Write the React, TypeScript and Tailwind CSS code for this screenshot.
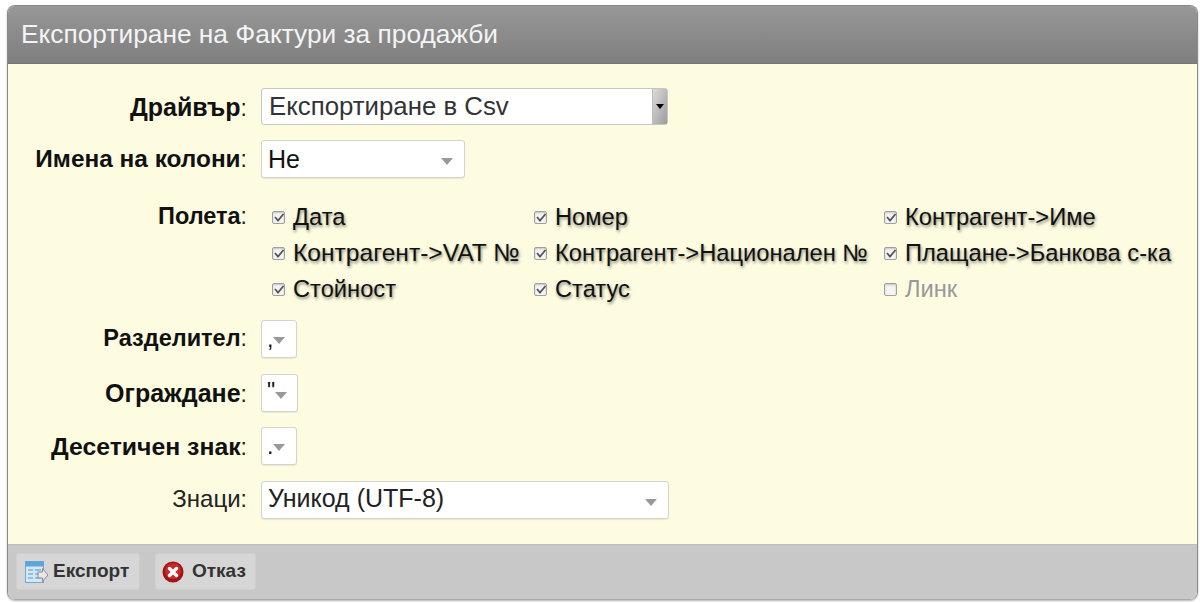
function Row({ label, bold = true, children, cls, sizeCls = "text-[24.4px]", labelCls = "" }: { label: string; bold?: boolean; children: React.ReactNode; cls: string; sizeCls?: string; labelCls?: string }) {
  return (
    <div className={`flex items-center ${cls}`}>
      <div className={`relative w-[239px] shrink-0 text-right leading-[28px] text-[#111] whitespace-nowrap ${labelCls}`}>
        <span className={bold ? `font-bold ${sizeCls}` : "text-[#222] text-[24px]"}>{label}</span>
        <span className="text-[#222] text-[23px]">:</span>
      </div>
      <div className="ml-[14px]">{children}</div>
    </div>
  );
}

function Arrow({ cls = "" }: { cls?: string }) {
  return <span className={`block w-0 h-0 border-l-[6px] border-r-[6px] border-t-[7px] border-l-transparent border-r-transparent border-t-[#999] ${cls}`} />;
}

function Box({ w, h, children, textCls = "", arrowCls = "" }: { w: string; h: string; children: React.ReactNode; textCls?: string; arrowCls?: string }) {
  return (
    <div className={`relative ${w} ${h} bg-white border border-[#d4d4cc] rounded-[3px] shadow-[0_1px_1px_rgba(0,0,0,0.08)] flex items-start`}>
      <span className={`pl-[6px] text-[25px] leading-[28px] text-[#222] ${textCls}`}>{children}</span>
      <Arrow cls={`absolute ${arrowCls}`} />
    </div>
  );
}

function Check({ label, checked = true, w, sizeCls = "text-[23.7px]" }: { label: string; checked?: boolean; w: string; sizeCls?: string }) {
  return (
    <label className={`flex items-center h-[36px] ${w}`}>
      <span className="relative w-[13px] h-[13px] shrink-0 mr-[8px] bg-[#f4f4f4] border border-[#a0a0a0] rounded-[2px] shadow-[inset_0_1px_2px_rgba(0,0,0,0.2)]">
        {checked && (
          <svg viewBox="0 0 13 13" className="absolute left-[-1px] top-[-1px] w-[14px] h-[13px]">
            <path d="M2.5 6 L5.5 9.5 L11 3" fill="none" stroke="#555" strokeWidth="1.8" />
          </svg>
        )}
      </span>
      <span className={checked
        ? `${sizeCls} leading-[28px] whitespace-nowrap text-[#111] [text-shadow:1px_2px_3px_rgba(0,0,0,0.45)]`
        : `${sizeCls} leading-[28px] whitespace-nowrap text-[#999]`}>{label}</span>
    </label>
  );
}

function ExportIcon() {
  return (
    <svg viewBox="0 0 24 24" className="w-[24px] h-[24px] shrink-0">
      <rect x="1.5" y="1.5" width="18" height="21" fill="#d6e6f4" stroke="#7aa6c8" />
      <rect x="1.5" y="1.5" width="18" height="5" fill="#5aa5dc" />
      <path d="M4 9h5v2H4zM11 9h6v2h-6zM4 13h5v2H4zM11 13h6v2h-6zM4 17h5v2H4zM11 17h6v2h-6z" fill="#8fbfe2" />
      <path d="M14 12h4.5V8.5L24 15l-5.5 6.5V18H14z" fill="#e8e8e8" stroke="#8a8a8a" />
    </svg>
  );
}

function CancelIcon() {
  return (
    <svg viewBox="0 0 22 22" className="w-[22px] h-[22px] shrink-0">
      <circle cx="11" cy="11" r="10.5" fill="#a01414" />
      <circle cx="11" cy="10" r="8" fill="#c62a2a" />
      <path d="M7.5 7.5 L14.5 14.5 M14.5 7.5 L7.5 14.5" stroke="#fff" strokeWidth="3.4" strokeLinecap="round" />
    </svg>
  );
}

export default function App() {
  return (
    <div className="w-[1200px] h-[603px] bg-white pt-[5px] pl-[7px] font-['Liberation_Sans',Arial,sans-serif]">
      <div className="w-[1191px] h-[595px] flex flex-col rounded-[8px] overflow-hidden border border-[#8a8a8a] border-b-[#aaa] shadow-[0_1px_2px_rgba(0,0,0,0.3)]">
        <div className="h-[58px] shrink-0 bg-gradient-to-b from-[#979797] to-[#7f7f7f] border-b border-[#777] flex items-center pl-[13px] pb-[2px]">
          <span className="text-[26.3px] text-[#f4f4f4] leading-[30px]">Експортиране на Фактури за продажби</span>
        </div>
        <div className="flex-1 bg-[#fdfce1] pt-[24px]">
          <Row label="Драйвър" cls="h-[37px]" sizeCls="text-[25px]" labelCls="pt-[5px]">
            <div className="relative w-[407px] h-[37px] bg-white border border-[#c8c8c0] rounded-[3px] flex items-center">
              <span className="pl-[7px] pb-[1px] text-[25.8px] leading-[28px] text-[#333]">Експортиране в Csv</span>
              <span className="absolute right-0 top-0 bottom-0 w-[15px] bg-gradient-to-br from-[#dcdcdc] to-[#9c9c9c] border-l border-[#bbb] flex items-center justify-center">
                <span className="block w-0 h-0 border-l-[4px] border-r-[4px] border-t-[5px] border-l-transparent border-r-transparent border-t-black" />
              </span>
            </div>
          </Row>
          <Row label="Имена на колони" cls="mt-[15px] h-[38px]" labelCls="pt-[3px]">
            <Box w="w-[204px]" h="h-[38px]" textCls="pt-[4px] !text-[#111]" arrowCls="right-[11px] top-[17px]">Не</Box>
          </Row>
          <div className="flex mt-[21px]">
            <div className="w-[239px] shrink-0 text-right text-[23px] leading-[34px] text-[#222]">
              <span className="font-bold text-[#111] text-[23.5px]">Полета</span>:
            </div>
            <div className="ml-[25px] flex flex-col">
              <div className="flex">
                <Check w="w-[262px]" label="Дата" />
                <Check w="w-[350px]" label="Номер" />
                <Check w="w-[280px]" label="Контрагент->Име" />
              </div>
              <div className="flex">
                <Check w="w-[262px]" label="Контрагент->VAT №" sizeCls="text-[24.6px]" />
                <Check w="w-[350px]" label="Контрагент->Национален №" />
                <Check w="w-[280px]" label="Плащане->Банкова с-ка" />
              </div>
              <div className="flex">
                <Check w="w-[262px]" label="Стойност" />
                <Check w="w-[350px]" label="Статус" />
                <Check w="w-[280px]" label="Линк" checked={false} />
              </div>
            </div>
          </div>
          <Row label="Разделител" cls="mt-[13px] h-[38px]" sizeCls="text-[23.5px]">
            <Box w="w-[36px]" h="h-[38px]" textCls="!pl-[5px] pt-[4px] !text-[23px] !text-[#111]" arrowCls="right-[11px] top-[16px]">,</Box>
          </Row>
          <Row label="Ограждане" cls="mt-[16px] h-[38px]" sizeCls="text-[25px]" labelCls="pt-[3px]">
            <Box w="w-[37px]" h="h-[38px]" textCls="!pl-[5px] pt-[2px] !text-[23px] !text-[#111]" arrowCls="right-[10px] top-[17px]">"</Box>
          </Row>
          <Row label="Десетичен знак" cls="mt-[15px] h-[38px]" sizeCls="text-[24.8px]" labelCls="pt-[5px]">
            <Box w="w-[36px]" h="h-[38px]" textCls="!pl-[5px] pt-[4px] !text-[23px] !text-[#111]" arrowCls="right-[11px] top-[16px]">.</Box>
          </Row>
          <Row label="Знаци" bold={false} cls="mt-[16px] h-[38px]">
            <Box w="w-[408px]" h="h-[38px]" textCls="pt-[2px]" arrowCls="right-[11px] top-[17px]">Уникод (UTF-8)</Box>
          </Row>
        </div>
        <div className="h-[55px] shrink-0 bg-[#c8c8c8] border-t border-[#bdbdbd] flex items-start pt-[8px] pl-[8px] gap-[15px]">
          <button className="h-[37px] w-[124px] flex items-center pl-[7px] gap-[5px] rounded-[3px] bg-[#d6d6d6] border border-[#cfcfcf] text-[#333] text-[19px] font-bold">
            <ExportIcon />
            <span>Експорт</span>
          </button>
          <button className="h-[37px] w-[101px] flex items-center pl-[6px] gap-[8px] rounded-[3px] bg-[#d6d6d6] border border-[#cfcfcf] text-[#333] text-[19px] font-bold">
            <CancelIcon />
            <span>Отказ</span>
          </button>
        </div>
      </div>
    </div>
  );
}
